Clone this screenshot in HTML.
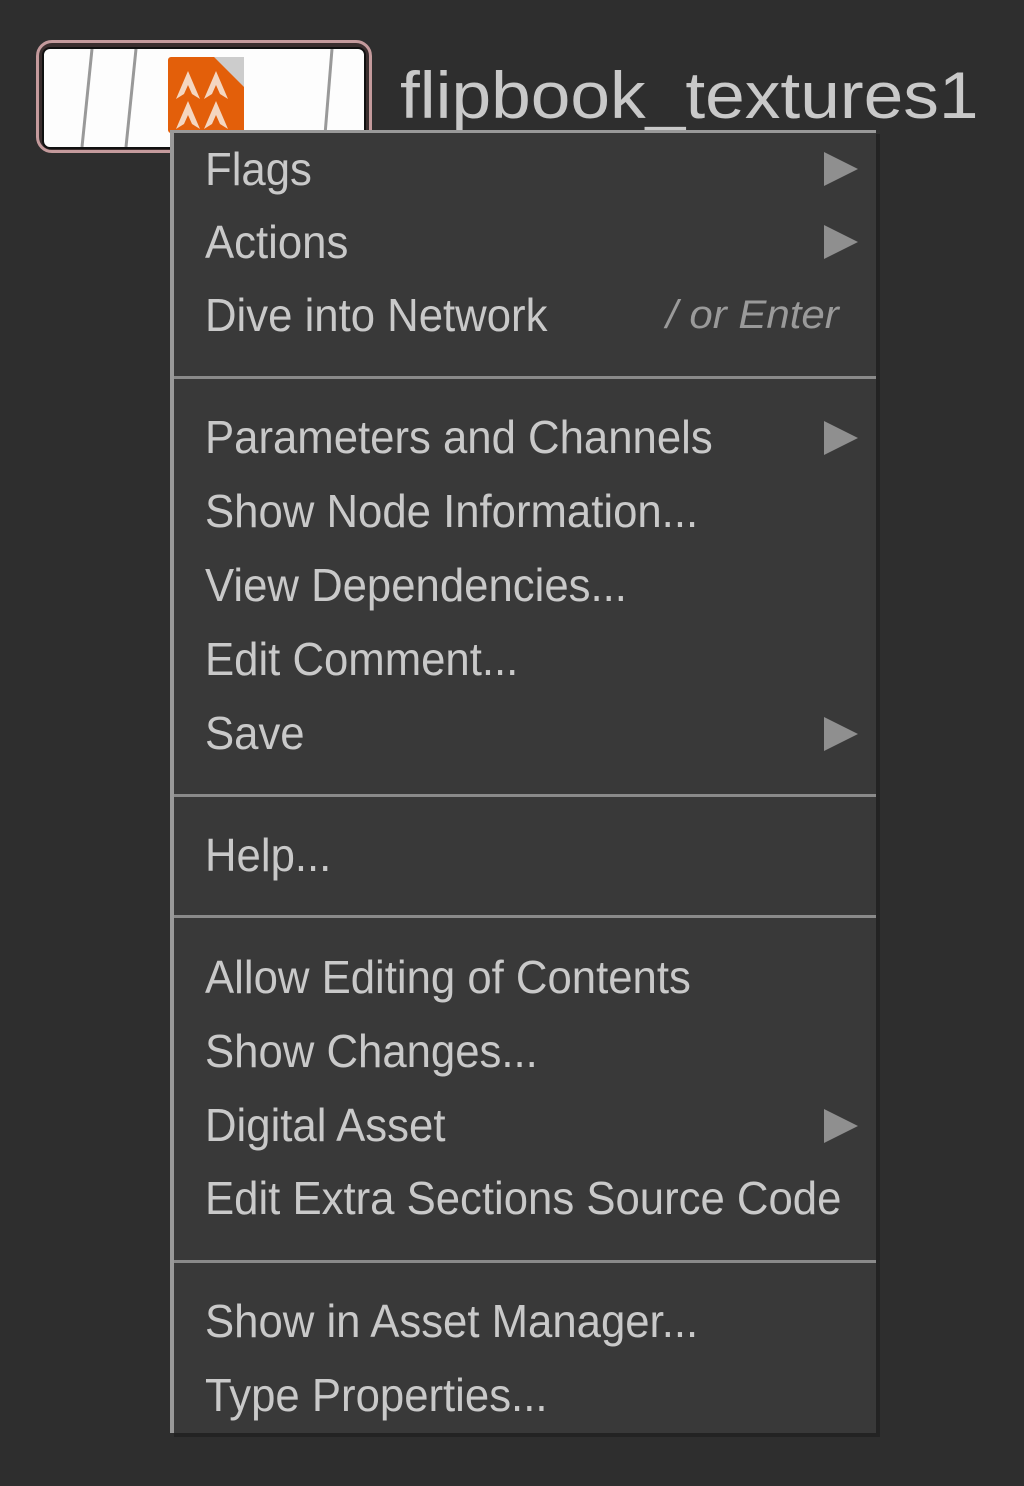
<!DOCTYPE html>
<html><head><style>
html,body{margin:0;padding:0;background:#2e2e2e;}
body{width:1024px;height:1486px;position:relative;overflow:hidden;font-family:"Liberation Sans",sans-serif;}
.t{position:absolute;left:205px;font-size:46px;line-height:46px;color:#c9c9c9;white-space:nowrap;transform:scaleX(0.95);transform-origin:0 0;}
.a{position:absolute;left:824px;width:0;height:0;border-top:17px solid transparent;border-bottom:17px solid transparent;border-left:34px solid #8f8f8f;}
.s{position:absolute;left:174px;width:702px;height:3px;background:#8a8a8a;}
</style></head><body>
<div style="position:absolute;left:36px;top:40px;width:330px;height:107px;border:3px solid #c49a9c;border-radius:16px;background:#3a2e2e;"></div>
<div style="position:absolute;left:42px;top:47px;width:320px;height:98px;border:2px solid #111;border-radius:8px;background:#fdfdfd;overflow:hidden;">
<svg width="320" height="98" style="position:absolute;left:0;top:0">
<line x1="48" y1="0" x2="38" y2="98" stroke="#999" stroke-width="3"/>
<line x1="92" y1="0" x2="82" y2="98" stroke="#999" stroke-width="3"/>
<line x1="288" y1="0" x2="280" y2="98" stroke="#999" stroke-width="3"/>
</svg></div>
<div style="position:absolute;left:168px;top:57px;width:76px;height:76px;background:#e35f0a;border-radius:3px;"></div>
<div style="position:absolute;left:200px;top:57px;width:44px;height:30px;background:linear-gradient(225deg,#ccc 40%,transparent 41%);"></div>
<svg style="position:absolute;left:168px;top:57px" width="76" height="76">
<g fill="#f4d6c0"><path d="M8 42 L20 14 L32 42 L24 37 L20 28 L16 37Z"/><path d="M36 42 L48 14 L60 42 L52 37 L48 28 L44 37Z"/><path d="M8 72 L20 44 L32 72 L24 67 L20 58 L16 67Z"/><path d="M36 72 L48 44 L60 72 L52 67 L48 58 L44 67Z"/></g></svg>
<div style="position:absolute;left:400px;top:62px;font-size:66px;line-height:66px;color:#c9c9c9;white-space:nowrap;transform:scaleX(1.08);transform-origin:0 0;">flipbook_textures1</div>

<div style="position:absolute;left:170px;top:130px;width:706px;height:1303px;background:#393939;border-left:4px solid #999;border-top:3px solid #999;box-sizing:border-box;box-shadow:4px 4px 0 #232323;"></div>
<div class="s" style="top:376px"></div>
<div class="s" style="top:794px"></div>
<div class="s" style="top:915px"></div>
<div class="s" style="top:1260px"></div>

<div class="t" style="top:146px">Flags</div><div class="a" style="top:152px"></div>
<div class="t" style="top:219px">Actions</div><div class="a" style="top:225px"></div>
<div class="t" style="top:292px">Dive into Network</div>
<div style="position:absolute;left:666px;top:295px;font-size:40px;line-height:40px;font-style:italic;color:#9a9a9a;white-space:nowrap;transform:scaleX(1.05);transform-origin:0 0;">/ or Enter</div>
<div class="t" style="top:414px">Parameters and Channels</div><div class="a" style="top:421px"></div>
<div class="t" style="top:488px">Show Node Information...</div>
<div class="t" style="top:562px">View Dependencies...</div>
<div class="t" style="top:636px">Edit Comment...</div>
<div class="t" style="top:710px">Save</div><div class="a" style="top:717px"></div>
<div class="t" style="top:832px">Help...</div>
<div class="t" style="top:954px">Allow Editing of Contents</div>
<div class="t" style="top:1028px">Show Changes...</div>
<div class="t" style="top:1102px">Digital Asset</div><div class="a" style="top:1109px"></div>
<div class="t" style="top:1175px">Edit Extra Sections Source Code</div>
<div class="t" style="top:1298px">Show in Asset Manager...</div>
<div class="t" style="top:1372px">Type Properties...</div>
</body></html>
